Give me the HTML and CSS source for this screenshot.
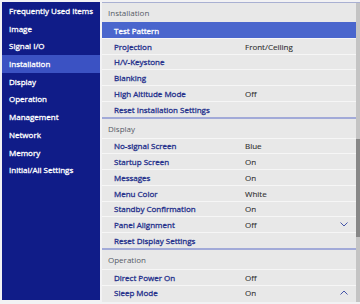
FILE: index.html
```html
<!DOCTYPE html>
<html>
<head>
<meta charset="utf-8">
<link rel="stylesheet" href="styles.css">
</head>
<body>
<div class="screen">
  <nav class="sidebar">
    <div class="nav-item">Frequently Used Items</div>
    <div class="nav-item">Image</div>
    <div class="nav-item">Signal I/O</div>
    <div class="nav-item active">Installation</div>
    <div class="nav-item">Display</div>
    <div class="nav-item">Operation</div>
    <div class="nav-item">Management</div>
    <div class="nav-item">Network</div>
    <div class="nav-item">Memory</div>
    <div class="nav-item">Initial/All Settings</div>
  </nav>
  <main class="panel">
    <div class="content">
      <section class="group">
        <div class="group-title">Installation</div>
        <div class="row selected"><span class="label">Test Pattern</span><span class="value"></span></div>
        <div class="row"><span class="label">Projection</span><span class="value">Front/Ceiling</span></div>
        <div class="row"><span class="label">H/V-Keystone</span><span class="value"></span></div>
        <div class="row"><span class="label">Blanking</span><span class="value"></span></div>
        <div class="row"><span class="label">High Altitude Mode</span><span class="value">Off</span></div>
        <div class="row"><span class="label">Reset Installation Settings</span><span class="value"></span></div>
      </section>
      <section class="group">
        <div class="group-title">Display</div>
        <div class="row"><span class="label">No-signal Screen</span><span class="value">Blue</span></div>
        <div class="row"><span class="label">Startup Screen</span><span class="value">On</span></div>
        <div class="row"><span class="label">Messages</span><span class="value">On</span></div>
        <div class="row"><span class="label">Menu Color</span><span class="value">White</span></div>
        <div class="row"><span class="label">Standby Confirmation</span><span class="value">On</span></div>
        <div class="row"><span class="label">Panel Alignment</span><span class="value">Off</span>
          <svg class="chev" width="8" height="5" viewBox="0 0 8 5"><path d="M0.5 0.5 L4 4 L7.5 0.5" fill="none" stroke="#4656a8" stroke-width="1"/></svg>
        </div>
        <div class="row"><span class="label">Reset Display Settings</span><span class="value"></span></div>
      </section>
      <section class="group">
        <div class="group-title">Operation</div>
        <div class="row"><span class="label">Direct Power On</span><span class="value">Off</span></div>
        <div class="row"><span class="label">Sleep Mode</span><span class="value">On</span>
          <svg class="chev" width="8" height="5" viewBox="0 0 8 5"><path d="M0.5 4.5 L4 1 L7.5 4.5" fill="none" stroke="#4656a8" stroke-width="1"/></svg>
        </div>
      </section>
    </div>
    <div class="scrollbar"><div class="thumb"></div></div>
  </main>
</div>
</body>
</html>
```
FILE: styles.css
```css
* { box-sizing: border-box; }
html, body { margin: 0; padding: 0; }
body {
  width: 360px;
  height: 304px;
  background: #f2f2f4;
  font-family: "Open Sans", "Noto Sans", sans-serif;
  font-size: 8px;
  overflow: hidden;
}
.screen {
  display: flex;
  gap: 2px;
  padding: 2px 0 2px 2px;
  height: 304px;
}
.sidebar {
  width: 98px;
  height: 298px;
  background: #101c88;
  display: flex;
  flex-direction: column;
}
.nav-item {
  height: 17.7px;
  line-height: 17.7px;
  padding-left: 7px;
  color: #ffffff;
  -webkit-text-stroke: 0.3px #ffffff;
  white-space: nowrap;
}
.nav-item.active { background: #3b52c3; }
.panel {
  flex: 1;
  display: flex;
  height: 300px;
  overflow: hidden;
  background: #e8e8e8;
  border-top: 1px solid #a9b0d2;
}
.content {
  flex: 1;
  display: flex;
  flex-direction: column;
}
.group + .group { border-top: 2px solid #a2aad8; }
.group-title {
  height: 19px;
  line-height: 19px;
  padding-left: 6px;
  color: #555a66;
}
.row {
  height: 15.75px;
  display: flex;
  align-items: center;
  padding-left: 12px;
  border-top: 1px solid #f6f6f6;
  color: #25318c;
}
.row .label { -webkit-text-stroke: 0.3px currentColor; }
.row.selected {
  background: #4a66cd;
  color: #ffffff;
  border-top-color: #4a66cd;
}
.label { width: 131px; white-space: nowrap; }
.value { flex: 1; color: #2e2e2e; -webkit-text-stroke: 0.1px currentColor; }
.chev { margin-right: 8px; }
.scrollbar {
  width: 4px;
  background: #c4c4c4;
  display: flex;
  flex-direction: column;
  padding-top: 136px;
}
.thumb { height: 98px; background: #878787; }
```
